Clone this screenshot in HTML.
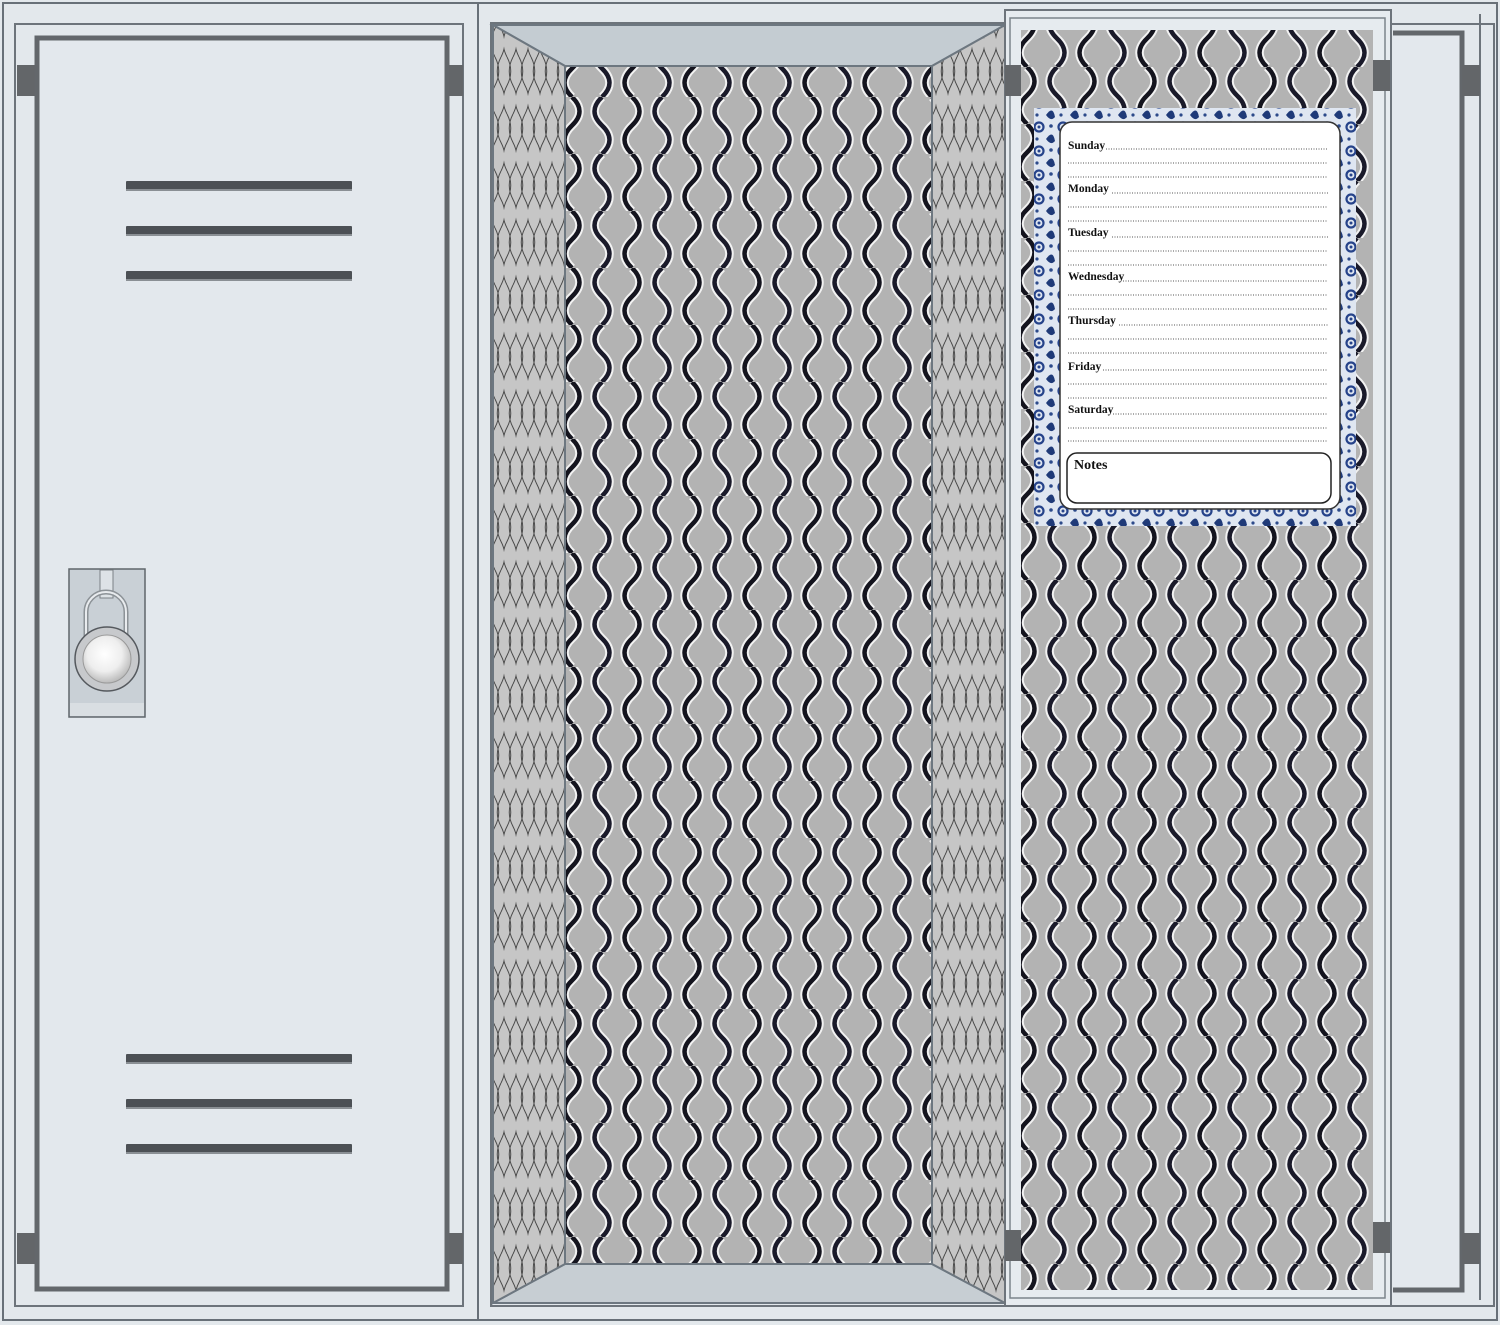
<!DOCTYPE html>
<html><head><meta charset="utf-8"><style>
html,body{margin:0;padding:0;background:#e3e8ec;}
svg{display:block}
.d{font-family:"Liberation Serif",serif;font-weight:bold;font-size:11.5px;fill:#111}
</style></head><body>
<svg width="1500" height="1325" viewBox="0 0 1500 1325" xmlns="http://www.w3.org/2000/svg">
<defs>
<g id="tile">
<rect width="60" height="57" fill="#b3b3b3"/>
<g fill="none">
<path d="M15,0 C25,9.5 25,19 15,28.5 C5,38 5,47.5 15,57" stroke="#f2f2f2" stroke-width="8.5"/>
<path d="M45,0 C35,9.5 35,19 45,28.5 C55,38 55,47.5 45,57" stroke="#f2f2f2" stroke-width="8.5"/>
<path d="M75,0 C65,9.5 65,19 75,28.5" stroke="#f2f2f2" stroke-width="8.5"/>
<path d="M-15,28.5 C-5,38 -5,47.5 -15,57" stroke="#f2f2f2" stroke-width="8.5"/>
<path d="M15,0 C25,9.5 25,19 15,28.5 C5,38 5,47.5 15,57" stroke="#14141e" stroke-width="4.5"/>
<path d="M45,0 C35,9.5 35,19 45,28.5 C55,38 55,47.5 45,57" stroke="#1a1a2a" stroke-width="4.5"/>
</g>
</g>
<pattern id="og" patternUnits="userSpaceOnUse" width="60" height="57" x="557" y="40"><use href="#tile"/></pattern>
<pattern id="og2" patternUnits="userSpaceOnUse" width="60" height="57" x="1012" y="10"><use href="#tile"/></pattern>
<pattern id="side" patternUnits="userSpaceOnUse" width="12" height="57">
<rect width="12" height="57" fill="#c6c6c6"/>
<path d="M3,0 C8,9.5 8,19 3,28.5 C-2,38 -2,47.5 3,57 M9,0 C4,9.5 4,19 9,28.5 C14,38 14,47.5 9,57" fill="none" stroke="#4a4a4a" stroke-width="1"/>
</pattern>
<pattern id="pais" patternUnits="userSpaceOnUse" width="24" height="24">
<rect width="24" height="24" fill="#dfe6f1"/>
<circle cx="7" cy="7" r="4.5" fill="none" stroke="#26438a" stroke-width="2.2"/>
<circle cx="7" cy="7" r="1.5" fill="#26438a"/>
<path d="M14,19 q7,-10 9,2 q-4,5 -9,-2z" fill="#1f3a78"/>
<circle cx="19" cy="6" r="1.8" fill="#2c4a8a"/>
<circle cx="5" cy="19" r="1.6" fill="#2c4a8a"/>
</pattern>
<radialGradient id="dial" cx="0.45" cy="0.4" r="0.6">
<stop offset="0" stop-color="#fff"/><stop offset="0.6" stop-color="#eee"/><stop offset="1" stop-color="#bbb"/>
</radialGradient>
</defs>

<rect x="3" y="3" width="1494" height="1317" fill="#e3e8ec" stroke="#687078" stroke-width="2"/>
<line x1="478" y1="3" x2="478" y2="1320" stroke="#687078" stroke-width="2"/>

<!-- LEFT LOCKER -->
<rect x="15" y="24" width="448" height="1282" fill="none" stroke="#6d747b" stroke-width="2"/>
<rect x="17" y="65" width="20" height="31" fill="#636669"/>
<rect x="443" y="65" width="20" height="31" fill="#636669"/>
<rect x="17" y="1233" width="20" height="31" fill="#636669"/>
<rect x="443" y="1233" width="20" height="31" fill="#636669"/>
<rect x="37" y="38" width="410" height="1251" fill="#e3e8ed" stroke="#63676b" stroke-width="5"/>
<g fill="#4c5055">
<rect x="126" y="181" width="226" height="10" rx="1"/>
<rect x="126" y="226" width="226" height="10" rx="1"/>
<rect x="126" y="271" width="226" height="10" rx="1"/>
<rect x="126" y="1054" width="226" height="10" rx="1"/>
<rect x="126" y="1099" width="226" height="10" rx="1"/>
<rect x="126" y="1144" width="226" height="10" rx="1"/>
</g>
<g fill="#8a8f94">
<rect x="126" y="189" width="226" height="2"/><rect x="126" y="234" width="226" height="2"/><rect x="126" y="279" width="226" height="2"/>
<rect x="126" y="1062" width="226" height="2"/><rect x="126" y="1107" width="226" height="2"/><rect x="126" y="1152" width="226" height="2"/>
</g>
<rect x="69" y="569" width="76" height="148" fill="#c9d0d6" stroke="#5f656b" stroke-width="1.5"/>
<rect x="70" y="703" width="74" height="13" fill="#d9dee2"/>
<rect x="100" y="570" width="13" height="28" fill="#dde2e6" stroke="#7b8186"/>
<path d="M86,650 V612 a20,20 0 0 1 40,0 V650" fill="none" stroke="#8c9297" stroke-width="5"/>
<path d="M86,650 V612 a20,20 0 0 1 40,0 V650" fill="none" stroke="#e8ebee" stroke-width="2"/>
<circle cx="107" cy="659" r="32" fill="#c7c9cc" stroke="#55595e" stroke-width="1.5"/>
<circle cx="107" cy="659" r="24" fill="url(#dial)" stroke="#999" stroke-width="1"/>

<!-- MIDDLE OPEN LOCKER -->
<rect x="491" y="23" width="516" height="1283" fill="#e3e8ec" stroke="#6d747b" stroke-width="2"/>
<polygon points="493,25 1005,25 932,66 565,66" fill="#c4ccd2" stroke="#6d7780" stroke-width="2"/>
<polygon points="493,1303 1005,1303 932,1264 565,1264" fill="#c7ced3" stroke="#6d7780" stroke-width="2"/>
<polygon points="493,25 565,66 565,1264 493,1303" fill="url(#side)" stroke="#6d7780" stroke-width="2"/>
<polygon points="1005,25 932,66 932,1264 1005,1303" fill="url(#side)" stroke="#6d7780" stroke-width="2"/>
<rect x="565" y="66" width="367" height="1198" fill="url(#og)" stroke="#6d7780" stroke-width="2"/>

<!-- RIGHT PARTIAL LOCKER -->
<rect x="1390" y="24" width="104" height="1282" fill="none" stroke="#6d747b" stroke-width="2"/>
<path d="M1393,33 H1462 V1290 H1393" fill="#e3e8ed" stroke="#63676b" stroke-width="5"/>
<line x1="1480" y1="14" x2="1480" y2="1300" stroke="#6d747b" stroke-width="2"/>
<rect x="1462" y="65" width="18" height="31" fill="#636669"/>
<rect x="1462" y="1233" width="18" height="31" fill="#636669"/>

<!-- RIGHT OPEN DOOR -->
<rect x="1005" y="10" width="386" height="1296" fill="#e6ebef" stroke="#6d747b" stroke-width="2"/>
<rect x="1010" y="18" width="375" height="1280" fill="none" stroke="#7c848b" stroke-width="1.5"/>
<rect x="1005" y="65" width="16" height="31" fill="#636669"/>
<rect x="1373" y="60" width="17" height="31" fill="#636669"/>
<rect x="1005" y="1230" width="16" height="31" fill="#636669"/>
<rect x="1373" y="1222" width="17" height="31" fill="#636669"/>
<rect x="1021" y="30" width="352" height="1260" fill="url(#og2)"/>

<rect x="1034" y="108" width="322" height="418" fill="url(#pais)"/>
<rect x="1060" y="122" width="280" height="387" rx="12" fill="#fff" stroke="#333" stroke-width="1.5"/>
<g class="d">
<text x="1068" y="149">Sunday</text>
<text x="1068" y="192">Monday</text>
<text x="1068" y="236">Tuesday</text>
<text x="1068" y="280">Wednesday</text>
<text x="1068" y="324">Thursday</text>
<text x="1068" y="370">Friday</text>
<text x="1068" y="413">Saturday</text>
</g>
<g stroke="#555" stroke-width="1" stroke-dasharray="1,1.5">
<line x1="1106" y1="149" x2="1328" y2="149"/><line x1="1068" y1="163" x2="1328" y2="163"/><line x1="1068" y1="177" x2="1328" y2="177"/>
<line x1="1112" y1="193" x2="1328" y2="193"/><line x1="1068" y1="207" x2="1328" y2="207"/><line x1="1068" y1="221" x2="1328" y2="221"/>
<line x1="1112" y1="237" x2="1328" y2="237"/><line x1="1068" y1="251" x2="1328" y2="251"/><line x1="1068" y1="265" x2="1328" y2="265"/>
<line x1="1123" y1="281" x2="1328" y2="281"/><line x1="1068" y1="295" x2="1328" y2="295"/><line x1="1068" y1="309" x2="1328" y2="309"/>
<line x1="1119" y1="325" x2="1328" y2="325"/><line x1="1068" y1="339" x2="1328" y2="339"/><line x1="1068" y1="353" x2="1328" y2="353"/>
<line x1="1103" y1="370" x2="1328" y2="370"/><line x1="1068" y1="384" x2="1328" y2="384"/><line x1="1068" y1="398" x2="1328" y2="398"/>
<line x1="1113" y1="414" x2="1328" y2="414"/><line x1="1068" y1="428" x2="1328" y2="428"/><line x1="1068" y1="441" x2="1328" y2="441"/>
</g>
<rect x="1067" y="453" width="264" height="50" rx="10" fill="#fff" stroke="#222" stroke-width="1.5"/>
<text x="1074" y="469" style="font-family:'Liberation Serif',serif;font-weight:bold;font-size:14px;fill:#111">Notes</text>
</svg>
</body></html>
